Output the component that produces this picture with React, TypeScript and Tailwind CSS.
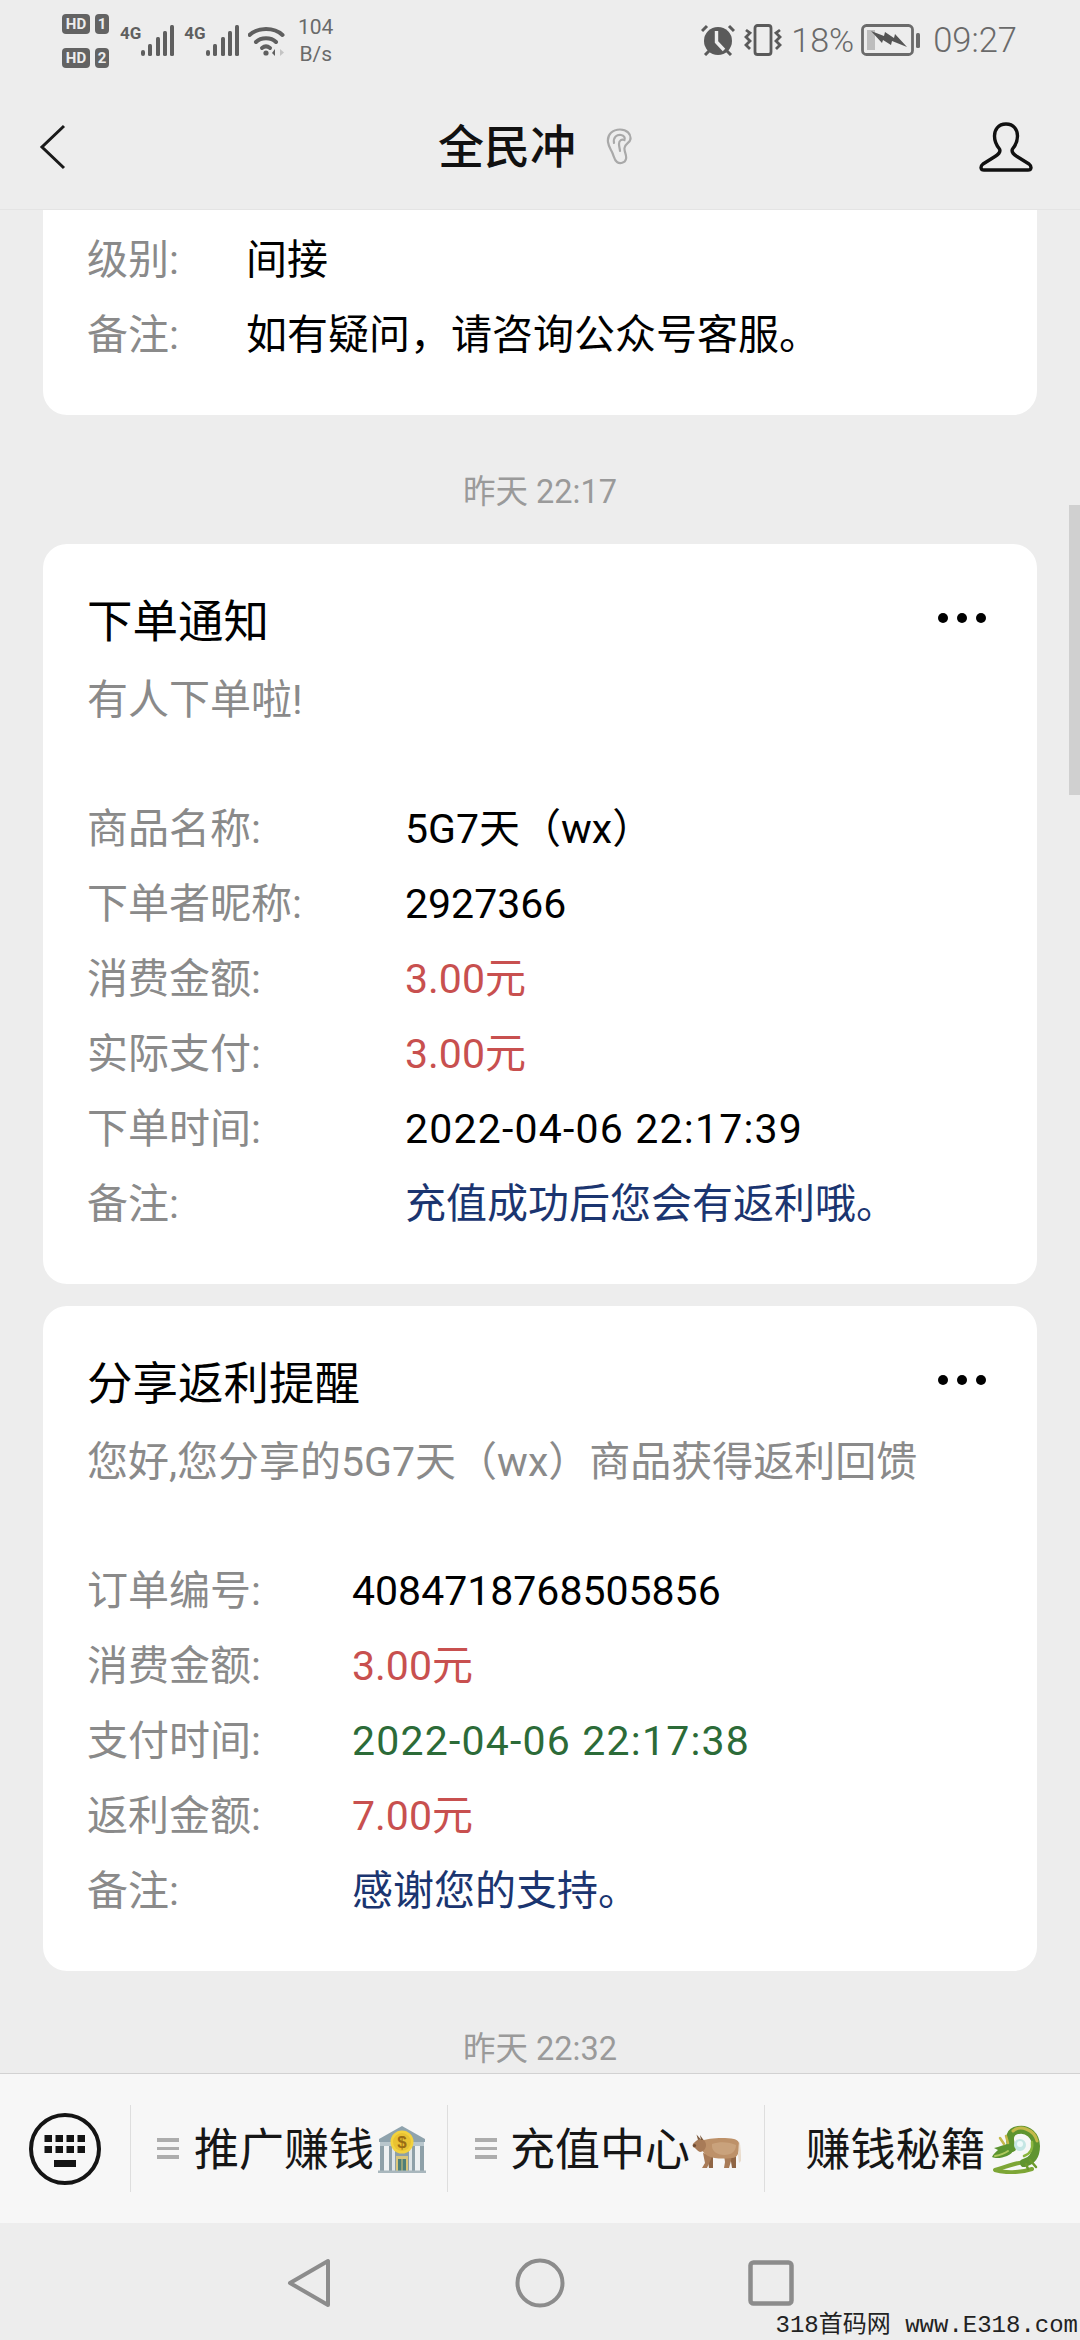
type Row = { label: string; value: string; color: string; spaced?: boolean };

const rows1: Row[] = [
  { label: "级别:", value: "间接", color: "text-black" },
  { label: "备注:", value: "如有疑问，请咨询公众号客服。", color: "text-black" },
];

const rows2: Row[] = [
  { label: "商品名称:", value: "5G7天（wx）", color: "text-black" },
  { label: "下单者昵称:", value: "2927366", color: "text-black" },
  { label: "消费金额:", value: "3.00元", color: "text-[#c8504f]" },
  { label: "实际支付:", value: "3.00元", color: "text-[#c8504f]" },
  { label: "下单时间:", value: "2022-04-06 22:17:39", color: "text-black", spaced: true },
  { label: "备注:", value: "充值成功后您会有返利哦。", color: "text-[#1b3570]" },
];

const rows3: Row[] = [
  { label: "订单编号:", value: "4084718768505856", color: "text-black" },
  { label: "消费金额:", value: "3.00元", color: "text-[#c8504f]" },
  { label: "支付时间:", value: "2022-04-06 22:17:38", color: "text-[#2c6b38]", spaced: true },
  { label: "返利金额:", value: "7.00元", color: "text-[#c8504f]" },
  { label: "备注:", value: "感谢您的支持。", color: "text-[#1b3570]" },
];

function Rows({ rows, labelWidth }: { rows: Row[]; labelWidth: string }) {
  return (
    <div className="flex flex-col">
      {rows.map((row, i) => (
        <div key={i} className="flex h-[75px] items-center pt-[2px] text-[41px] leading-[73px]">
          <span className={`${labelWidth} shrink-0 text-[#8a8a8a]`}>{row.label}</span>
          <span className={`${row.color} ${row.spaced ? "tracking-[1.2px]" : ""}`}>{row.value}</span>
        </div>
      ))}
    </div>
  );
}

function NoticeCard({ title, sub, rows, labelWidth }: { title: string; sub: string; rows: Row[]; labelWidth: string }) {
  return (
    <div className="mx-[43px] rounded-[24px] bg-white px-[44px] pt-[46px] pb-[43px]">
      <div className="flex h-[64px] items-center justify-between">
        <span className="pt-[2px] text-[45.5px] leading-[62px] text-black">{title}</span>
        <span className="mr-[7px] mb-[8px] flex gap-[9px]">
          <i className="size-[10px] rounded-full bg-black" />
          <i className="size-[10px] rounded-full bg-black" />
          <i className="size-[10px] rounded-full bg-black" />
        </span>
      </div>
      <p className="mt-[14px] pt-[1px] text-[41px] leading-[63px] text-[#8a8a8a]">{sub}</p>
      <div className="mt-[59px]">
        <Rows rows={rows} labelWidth={labelWidth} />
      </div>
    </div>
  );
}

function Signal() {
  return (
    <svg width="33" height="31" viewBox="0 0 33 31" fill="#5f5f5f">
      <rect x="0" y="25" width="4" height="6" rx="2" />
      <rect x="7" y="19" width="4" height="12" rx="1.5" />
      <rect x="15" y="12" width="4" height="19" rx="1.5" />
      <rect x="22" y="6" width="4" height="25" rx="1.5" />
      <rect x="29" y="0" width="4" height="31" rx="1.5" />
    </svg>
  );
}

function Wifi() {
  return (
    <svg width="38" height="32" viewBox="0 0 38 32" fill="none" stroke="#5f5f5f" strokeWidth="4" strokeLinecap="round">
      <path d="M1.5 10 C10 2 26 2 34.5 10" />
      <path d="M8 17 C13 12 23 12 28 17" />
      <path d="M14 23 C16.5 21 19.5 21 22 23" />
      <circle cx="18" cy="28" r="2.6" fill="#5f5f5f" stroke="none" />
      <path d="M27 24 L27 31 L24 28 Z" fill="#5f5f5f" stroke="none" />
      <path d="M32 24 L36 27.5 L32 31 Z" fill="#c4c4c4" stroke="none" />
    </svg>
  );
}

function Alarm() {
  return (
    <svg width="34" height="32" viewBox="0 0 34 32">
      <circle cx="17" cy="17" r="14" fill="#5a5a5a" />
      <path d="M15.5 7 L15.5 18 L23 26" fill="none" stroke="#ededed" strokeWidth="3.4" />
      <path d="M1 7 L6 2 M33 7 L28 2 M4 31 L8 27 M30 31 L26 27" stroke="#5a5a5a" strokeWidth="3" />
    </svg>
  );
}

function Vibrate() {
  return (
    <svg width="38" height="32" viewBox="0 0 38 32" fill="none" stroke="#5a5a5a">
      <rect x="11" y="1.5" width="16" height="29" rx="2.5" strokeWidth="2.8" />
      <path d="M2 6 L6 9 L2 13 L6 17 L2 21 L6 25" strokeWidth="2.8" />
      <path d="M36 6 L32 9 L36 13 L32 17 L36 21 L32 25" strokeWidth="2.8" />
    </svg>
  );
}

function Battery() {
  return (
    <svg width="59" height="32" viewBox="0 0 59 32">
      <rect x="1.5" y="1.5" width="50" height="29" rx="4" fill="none" stroke="#6b6b6b" strokeWidth="2.8" />
      <rect x="6" y="6" width="8" height="20" fill="#bdbdbd" />
      <path d="M10 7 L23 12 L24 8 L33 14 L34 10 L46 23 L31 17 L30 21 L22 16 L21 19 Z" fill="#555" />
      <rect x="55" y="9" width="4" height="15" rx="1.5" fill="#6b6b6b" />
    </svg>
  );
}

function Ear() {
  return (
    <svg width="26" height="37" viewBox="0 0 26 37" fill="none" stroke="#a9a9a9" strokeWidth="2.2" strokeLinecap="round">
      <path d="M2 14 C1 6 7 1.5 14 1.5 C21 1.5 25 6 24.5 11 C24 15 19 15.5 18.5 20 C18 24 21 27 20 31 C19 35 14 36 11 34 C8 32 8 28 6 24 C4 20 2.5 18 2 14 Z" />
      <path d="M8 15 C7 9 11 6.5 15 7 C18 7.5 19.5 10 18.5 12 C16 11 13 12 13 16 C13 19 14 21 14 23" />
    </svg>
  );
}

function Person() {
  return (
    <svg width="54" height="50" viewBox="0 0 54 50" fill="none" stroke="#111" strokeWidth="3.4" strokeLinejoin="round">
      <path d="M27 2 C19 2 15.5 8 15.5 14 C15.5 20 18 24 20.5 27 C22 30 20 32 16 34.5 L4 42 C1 44.5 1.5 48 5 48 L49 48 C52.5 48 53 44.5 50 42 L38 34.5 C34 32 32 30 33.5 27 C36 24 38.5 20 38.5 14 C38.5 8 35 2 27 2 Z" />
    </svg>
  );
}

function Keyboard() {
  const xs = [15.5, 26.5, 37.5, 48.5];
  return (
    <svg width="72" height="72" viewBox="0 0 72 72">
      <circle cx="36" cy="36" r="34" fill="none" stroke="#141414" strokeWidth="4" />
      {xs.map((x) => (
        <rect key={`a${x}`} x={x} y="22" width="7.5" height="7" fill="#141414" />
      ))}
      {xs.map((x) => (
        <rect key={`b${x}`} x={x} y="33" width="7.5" height="7" fill="#141414" />
      ))}
      <rect x="25" y="47" width="22" height="7" fill="#141414" />
    </svg>
  );
}

function MenuLines() {
  return (
    <span className="flex w-[22px] shrink-0 flex-col gap-[5px]">
      <i className="h-[3.5px] bg-[#adadad]" />
      <i className="h-[3.5px] bg-[#adadad]" />
      <i className="h-[3.5px] bg-[#adadad]" />
    </span>
  );
}

function Bank() {
  return (
    <svg width="48" height="48" viewBox="0 0 48 48">
      <path d="M24 1 L47 14 L47 17 L1 17 L1 14 Z" fill="#8fa3ad" />
      <rect x="2" y="17" width="44" height="4" fill="#b8c6cc" />
      <rect x="2" y="21" width="44" height="25" fill="#8ea0a8" />
      <rect x="6" y="21" width="5" height="25" fill="#eef1f2" />
      <rect x="37" y="21" width="5" height="25" fill="#eef1f2" />
      <rect x="14" y="21" width="3" height="25" fill="#dfe5e7" />
      <rect x="31" y="21" width="3" height="25" fill="#dfe5e7" />
      <rect x="18" y="31" width="12" height="15" fill="#d9c67a" />
      <rect x="20" y="34" width="3.5" height="12" fill="#4f7f78" />
      <rect x="24.5" y="34" width="3.5" height="12" fill="#4f7f78" />
      <rect x="0" y="45.5" width="48" height="2.5" fill="#a9b7bd" />
      <circle cx="24" cy="17" r="11.5" fill="#f3d23e" />
      <circle cx="24" cy="17" r="9" fill="#e9c232" />
      <text x="24" y="23" textAnchor="middle" fontSize="17" fontWeight="700" fill="#9a6c14" fontFamily="Liberation Sans, sans-serif">$</text>
    </svg>
  );
}

function Ox() {
  return (
    <svg width="50" height="36" viewBox="0 0 50 36">
      {/* far legs */}
      <path d="M15 22 L17 35 L21 35 L21 24 Z M38 22 L40 35 L44 35 L44 22 Z" fill="#8f6544" />
      {/* near legs */}
      <path d="M11 20 L13 30 L10 35 L15 35 L19 26 L20 22 Z M32 22 L33 29 L32 35 L37 35 L39 28 L40 22 Z" fill="#a87b57" />
      {/* body */}
      <path d="M9 8 C16 5 32 4 42 6 C46.5 7 48 10 47.5 15 C47 20 45 25 40 25 C32 26 22 26 16 23 C12 21 10 18 9 14 Z" fill="#bd9169" />
      <path d="M20 11 C28 8 38 9 44 12 C44 18 40 22 32 22 C25 22 19 18 20 11 Z" fill="#c9a27c" />
      {/* tail */}
      <path d="M47 8 C49 13 49 20 49 28 L47 30 L46 22 Z" fill="#e9dccd" />
      {/* head */}
      <path d="M8 6 C11 6 14 8 14 12 C14 16 11 19 8 19 C5 18 4 15 1 14 C0 12 1 10 3 9 C4 8 6 6 8 6 Z" fill="#a87b57" />
      {/* horns */}
      <path d="M6 7 L4.5 1.5 L8.5 6 Z M9 7 L8 2 L11.5 7 Z" fill="#7d5a3e" />
      <circle cx="2.5" cy="12.5" r="1.6" fill="#6e4b33" />
    </svg>
  );
}

function Dragon() {
  return (
    <svg width="50" height="50" viewBox="0 0 50 50" fill="none" strokeLinecap="round" strokeLinejoin="round">
      {/* tail along the bottom */}
      <path d="M36 38 C28 38 18 42 5 46 C14 49 30 49 42 45" stroke="#7da636" strokeWidth="4" />
      {/* body loop */}
      <path d="M22 24 C18 14 20 7 28 6 C38 4 46 12 46 22 C46 31 42 37 34 39" stroke="#5f9430" strokeWidth="8" />
      <path d="M23 7 C30 1 44 5 47 17" stroke="#c4b94a" strokeWidth="3" />
      <path d="M34 32 C40 30 43 25 42 18" stroke="#8ab53e" strokeWidth="2.5" />
      {/* head */}
      <path d="M22 19 C25 24 24 29 17 32 C12 34 6 35 2 33 C3 30 6 28 8 26 L4 24 C9 23 15 20 22 19 Z" fill="#5c9430" />
      <path d="M5 32 C10 31 14 30 18 27" stroke="#afc95e" strokeWidth="2" />
      <path d="M14 20 L10 14 M18 19 L16 12" stroke="#c4b94a" strokeWidth="2.5" />
      {/* orb */}
      <circle cx="30" cy="21" r="6" fill="#c5e6e4" />
      <circle cx="30" cy="20" r="3" fill="#eefafa" />
      <path d="M40 36 L46 43 M36 40 L38 45" stroke="#6c9a2c" strokeWidth="2.5" />
    </svg>
  );
}

export default function App() {
  return (
    <div className="relative flex h-[2340px] w-[1080px] flex-col overflow-hidden bg-[#ededed] font-['Roboto','Noto_Sans_CJK_SC',sans-serif]">
      {/* status bar */}
      <div className="flex h-[100px] shrink-0 justify-between pt-[14px] pr-[63px] pl-[62px]">
        <div className="flex">
          <div className="flex flex-col gap-[14px]">
            <div className="flex gap-[5px]">
              <span className="flex h-[20px] w-[28px] items-center justify-center rounded-[4px] bg-[#636363] text-[15px] leading-none font-bold text-[#ededed]">HD</span>
              <span className="flex h-[20px] w-[14px] items-center justify-center rounded-[4px] bg-[#636363] text-[15px] leading-none font-bold text-[#ededed]">1</span>
            </div>
            <div className="flex gap-[5px]">
              <span className="flex h-[20px] w-[28px] items-center justify-center rounded-[4px] bg-[#636363] text-[15px] leading-none font-bold text-[#ededed]">HD</span>
              <span className="flex h-[20px] w-[14px] items-center justify-center rounded-[4px] bg-[#636363] text-[15px] leading-none font-bold text-[#ededed]">2</span>
            </div>
          </div>
          <div className="mt-[11px] ml-[11px] flex">
            <span className="text-[17px] leading-[16px] font-bold text-[#5f5f5f]">4G</span>
            <Signal />
            <span className="ml-[10px] text-[17px] leading-[16px] font-bold text-[#5f5f5f]">4G</span>
            <Signal />
            <span className="ml-[9px]">
              <Wifi />
            </span>
          </div>
          <div className="ml-[10px] flex w-[40px] flex-col items-center text-[21px] leading-[27px] text-[#6a6a6a]">
            <span>104</span>
            <span>B/s</span>
          </div>
        </div>
        <div className="mt-[10px] flex h-[32px] items-center text-[#6a6a6a]">
          <Alarm />
          <span className="ml-[9px]">
            <Vibrate />
          </span>
          <span className="ml-[9px] text-[34px] leading-none font-light">18%</span>
          <span className="ml-[7px]">
            <Battery />
          </span>
          <span className="ml-[13px] text-[34.5px] leading-none font-light">09:27</span>
        </div>
      </div>

      {/* title bar */}
      <div className="grid h-[110px] shrink-0 grid-cols-[1fr_auto_1fr] items-center border-b border-[#e4e4e4] pb-[16px]">
        <svg className="ml-[39px]" width="28" height="46" viewBox="0 0 28 46" fill="none" stroke="#1a1a1a" strokeWidth="3">
          <path d="M25 2 L3 23 L25 44" />
        </svg>
        <div className="mr-[10px] flex items-center">
          <span className="text-[46px] leading-none font-medium text-[#111]">全民冲</span>
          <span className="ml-[30px]">
            <Ear />
          </span>
        </div>
        <div className="mr-[47px] flex justify-end">
          <Person />
        </div>
      </div>

      {/* messages */}
      <div className="min-h-0 flex-1 overflow-hidden">
        <div className="mx-[43px] rounded-b-[24px] bg-white px-[44px] pt-[12px] pb-[43px]">
          <Rows rows={rows1} labelWidth="w-[159px]" />
        </div>
        <div className="h-[129px] pt-[53px] text-center text-[32.5px] leading-[48px] text-[#9a9a9a]">昨天 22:17</div>
        <NoticeCard title="下单通知" sub="有人下单啦!" rows={rows2} labelWidth="w-[318px]" />
        <div className="h-[22px]" />
        <NoticeCard title="分享返利提醒" sub="您好,您分享的5G7天（wx）商品获得返利回馈" rows={rows3} labelWidth="w-[265px]" />
        <div className="pt-[54px] text-center text-[32.5px] leading-[48px] text-[#9a9a9a]">昨天 22:32</div>
      </div>

      {/* menu bar */}
      <div className="flex h-[150px] shrink-0 items-center border-t border-[#d2d2d2] bg-[#f7f7f7] text-[45px] leading-none text-[#161616]">
        <div className="flex w-[130px] shrink-0 justify-center">
          <Keyboard />
        </div>
        <div className="flex h-[87px] w-[317px] shrink-0 items-center justify-center border-l border-[#dedede] pl-[5px]">
          <MenuLines />
          <span className="mt-[4px] ml-[15px]">推广赚钱</span>
          <span className="ml-[4px]">
            <Bank />
          </span>
        </div>
        <div className="flex h-[87px] w-[317px] shrink-0 items-center justify-center border-l border-[#dedede] pl-[5px]">
          <MenuLines />
          <span className="mt-[4px] ml-[13px]">充值中心</span>
          <span className="mt-[4px] ml-[2px]">
            <Ox />
          </span>
        </div>
        <div className="flex h-[87px] flex-1 items-center justify-center border-l border-[#dedede]">
          <span className="mt-[4px]">赚钱秘籍</span>
          <span className="ml-[4px]">
            <Dragon />
          </span>
        </div>
      </div>

      {/* system nav */}
      <div className="flex h-[117px] shrink-0 items-start pt-[35px]">
        <svg className="ml-[287px]" width="44" height="50" viewBox="0 0 44 50" fill="none" stroke="#8c8c8c" strokeWidth="4" strokeLinejoin="round">
          <path d="M41 3 L41 47 L3 25 Z" />
        </svg>
        <svg className="ml-[184px]" width="50" height="50" viewBox="0 0 50 50" fill="none" stroke="#8c8c8c" strokeWidth="4">
          <circle cx="25" cy="25" r="22.5" />
        </svg>
        <svg className="mt-[2px] ml-[183px]" width="46" height="46" viewBox="0 0 46 46" fill="none" stroke="#8c8c8c" strokeWidth="4.5">
          <rect x="2.5" y="2.5" width="41" height="41" rx="3" />
        </svg>
      </div>

      {/* scrollbar and watermark lie over the page */}
      <div className="absolute top-[505px] right-0 h-[290px] w-[11px] bg-[#d0d0d0]" />
      <div className="absolute right-[2px] bottom-[1px] font-['Liberation_Mono','Noto_Sans_CJK_SC',monospace] text-[24px] leading-[26px] whitespace-pre text-[#222]">
        318首码网 www.E318.com
      </div>
    </div>
  );
}
